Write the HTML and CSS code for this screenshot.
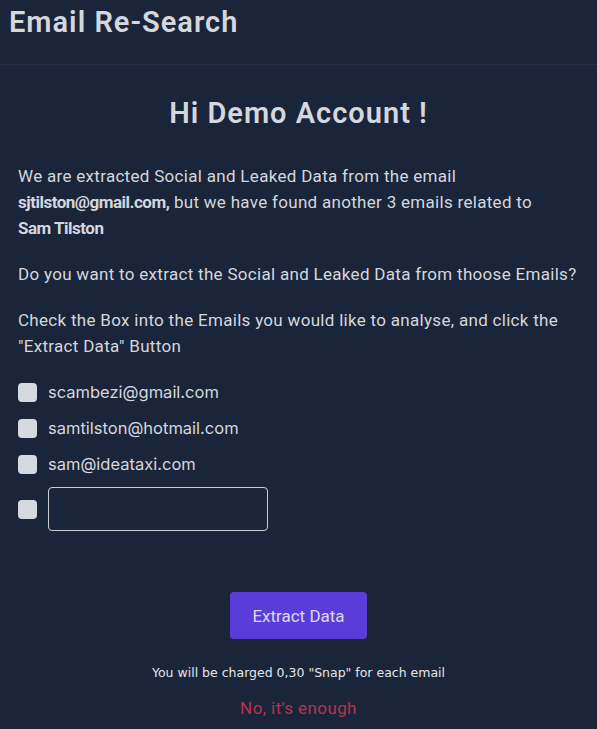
FILE: index.html
```html
<!DOCTYPE html>
<html lang="en">
<head>
    <meta charset="UTF-8">
    <meta name="viewport" content="width=device-width, initial-scale=1.0">
    <title>Email Re-Search</title>
    <link rel="stylesheet" href="styles.css">
</head>
<body>
    <header class="top-bar">
        <h1>Email Re-Search</h1>
    </header>

    <main class="content">
        <h2 class="greeting">Hi Demo Account !</h2>

        <p>We are extracted Social and Leaked Data from the email <strong>sjtilston@gmail.com,</strong> but we have found another 3 emails related to<br><strong>Sam Tilston</strong></p>

        <p>Do you want to extract the Social and Leaked Data from thoose Emails?</p>

        <p>Check the Box into the Emails you would like to analyse, and click the "Extract Data" Button</p>

        <!-- Email list -->
        <form class="email-list">
            <label class="email-row">
                <input type="checkbox">
                <span class="box"></span>
                <span class="email">scambezi@gmail.com</span>
            </label>
            <label class="email-row">
                <input type="checkbox">
                <span class="box"></span>
                <span class="email">samtilston@hotmail.com</span>
            </label>
            <label class="email-row">
                <input type="checkbox">
                <span class="box"></span>
                <span class="email">sam@ideataxi.com</span>
            </label>
            <div class="email-row">
                <label class="other-check">
                    <input type="checkbox">
                    <span class="box"></span>
                </label>
                <input type="text" class="other-email">
            </div>
        </form>

        <div class="actions">
            <button type="button" class="extract-btn">Extract Data</button>
            <p class="charge-note">You will be charged 0,30 "Snap" for each email</p>
            <a href="#" class="cancel-link">No, it's enough</a>
        </div>
    </main>
</body>
</html>
```

FILE: styles.css
```css
body {
    margin: 0;
    background: #1b2539;
    color: #d4d7de;
    font-family: Roboto, "Liberation Sans", sans-serif;
}

.top-bar {
    height: 65px;
    border-bottom: 1px solid #253048;
    box-sizing: border-box;
}

.top-bar h1 {
    margin: 0;
    padding: 4px 9px 0;
    font-size: 29px;
    font-weight: 600;
    line-height: 36px;
    color: #d4d7de;
    letter-spacing: 1px;
}

.content {
    padding: 28px 18px 0;
}

.greeting {
    margin: 0 0 30px;
    text-align: center;
    font-size: 29px;
    font-weight: 600;
    line-height: 40px;
    letter-spacing: 1px;
}

.content p {
    margin: 0 0 20px;
    font-size: 17px;
    line-height: 26px;
    letter-spacing: 0.3px;
}

.content strong {
    font-weight: 700;
    letter-spacing: -0.5px;
}

.email-list {
    display: flex;
    flex-direction: column;
    gap: 10px;
    margin-top: 6px;
}

.email-row {
    display: flex;
    align-items: center;
    gap: 11px;
    min-height: 26px;
    cursor: pointer;
}

.email-row input[type="checkbox"] {
    display: none;
}

.other-check {
    display: flex;
}

.box {
    width: 19px;
    height: 19px;
    border-radius: 4px;
    background: #d5d8de;
    flex-shrink: 0;
}

.email {
    font-family: Inter, "Liberation Sans", sans-serif;
    font-size: 16.5px;
    color: #d4d7de;
}

.other-email {
    width: 220px;
    height: 44px;
    box-sizing: border-box;
    background: transparent;
    border: 1px solid #c9ccd3;
    border-radius: 4px;
    color: #d4d7de;
    font-size: 16px;
    padding: 0 10px;
    outline: none;
}

.actions {
    display: flex;
    flex-direction: column;
    align-items: center;
    margin-top: 61px;
}

.extract-btn {
    width: 137px;
    height: 47px;
    border: none;
    border-radius: 4px;
    background: #5a3dd8;
    color: #ddd6f5;
    font-family: Roboto, "Liberation Sans", sans-serif;
    font-size: 17px;
    cursor: pointer;
}

.content .charge-note {
    margin: 25px 0 16px;
    font-family: "DejaVu Sans", Verdana, sans-serif;
    font-size: 12.5px;
    line-height: 18px;
    letter-spacing: 0;
    color: #e3e5ea;
}

.cancel-link {
    color: #b8334a;
    text-decoration: none;
    font-size: 17px;
    letter-spacing: 0.4px;
}
```
